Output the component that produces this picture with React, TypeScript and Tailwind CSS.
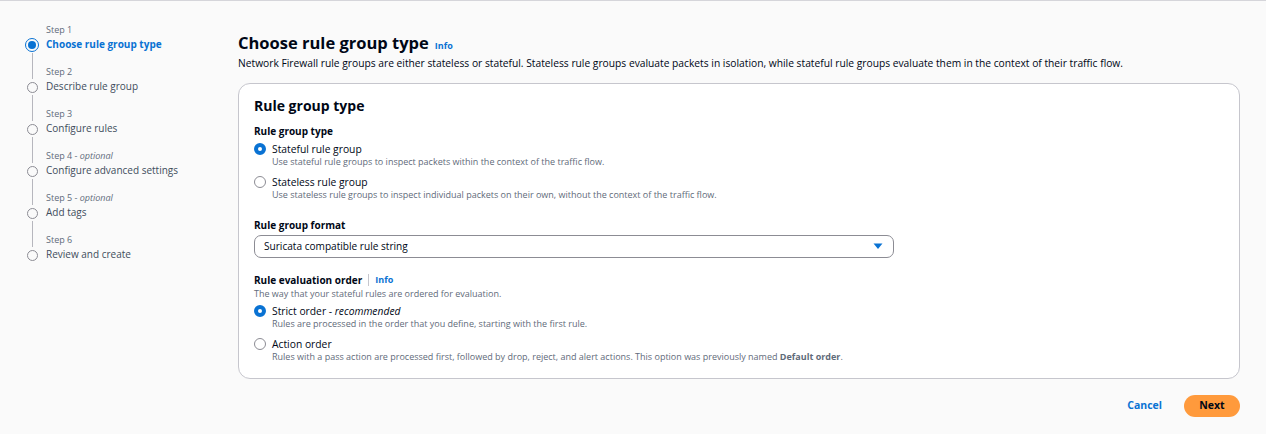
import React from "react";

const steps = [
  { step: "Step 1", optional: false, label: "Choose rule group type", active: true },
  { step: "Step 2", optional: false, label: "Describe rule group", active: false },
  { step: "Step 3", optional: false, label: "Configure rules", active: false },
  { step: "Step 4", optional: true, label: "Configure advanced settings", active: false },
  { step: "Step 5", optional: true, label: "Add tags", active: false },
  { step: "Step 6", optional: false, label: "Review and create", active: false },
];

function Radio({ checked }: { checked: boolean }) {
  return checked ? (
    <span className="mt-[1px] h-[12px] w-[12px] shrink-0 rounded-full border-[4px] border-[#0972d3] bg-white" />
  ) : (
    <span className="mt-[1px] h-[12px] w-[12px] shrink-0 rounded-full border border-[#8c8c94] bg-white" />
  );
}

function Option({
  checked,
  title,
  desc,
}: {
  checked: boolean;
  title: React.ReactNode;
  desc: React.ReactNode;
}) {
  return (
    <div className="flex gap-[6px]">
      <Radio checked={checked} />
      <div>
        <div className="text-[10.3px] leading-[14px] text-[#000716]">{title}</div>
        <div className="text-[9px] leading-[12px] text-[#5f6b7a]">{desc}</div>
      </div>
    </div>
  );
}

export default function App() {
  return (
    <div className="h-[434px] w-[1266px] border-t border-[#d5d5da] bg-[#fafafa] font-['Open_Sans',sans-serif] text-[#000716]">
      <div className="flex">
        {/* Side navigation */}
        <nav className="w-[238px] shrink-0 pl-[26px] pt-[22px]">
          {steps.map((s, i) => (
            <div key={s.step} className="flex gap-[8px]">
              <div className="flex w-[12px] flex-col items-center">
                <div className={i > 0 ? "h-[14px] w-[1px] bg-[#b6b6bd]" : "h-[14px] w-[1px]"} />
                <div className="flex h-[16px] items-center justify-center">
                  {s.active ? (
                    <span className="flex h-[14px] w-[14px] items-center justify-center rounded-full border-[1.5px] border-[#0972d3]">
                      <span className="h-[8px] w-[8px] rounded-full bg-[#0972d3]" />
                    </span>
                  ) : (
                    <span className="h-[11px] w-[11px] rounded-full border border-[#8c8c94]" />
                  )}
                </div>
                {i < steps.length - 1 && <span className="w-[1px] flex-1 bg-[#b6b6bd]" />}
              </div>
              <div className="pb-[14px]">
                <div className="text-[9px] leading-[14px] text-[#5f6b7a]">
                  {s.step}
                  {s.optional && (
                    <>
                      {" - "}
                      <i>optional</i>
                    </>
                  )}
                </div>
                <div
                  className={
                    s.active
                      ? "text-[10px] font-bold leading-[14px] text-[#0972d3]"
                      : "text-[10px] leading-[14px] text-[#414d5c]"
                  }
                >
                  {s.label}
                </div>
              </div>
            </div>
          ))}
        </nav>

        {/* Main content */}
        <main className="w-[1002px] pt-[31px]">
          <div className="flex items-baseline gap-[6px]">
            <h1 className="text-[16.5px] font-bold leading-[22px]">Choose rule group type</h1>
            <span className="text-[9px] font-bold text-[#0972d3]">Info</span>
          </div>
          <p className="mt-[2px] text-[10.25px] leading-[14px] text-[#000716]">
            Network Firewall rule groups are either stateless or stateful. Stateless rule groups evaluate packets in isolation, while stateful rule groups evaluate them in the context of their traffic flow.
          </p>

          <section className="mt-[13px] h-[296px] rounded-[12px] border border-[#c6c6cd] bg-white px-[15px] pt-[12px]">
            <h2 className="text-[14px] font-bold leading-[20px]">Rule group type</h2>

            <div className="mt-[8px] text-[10px] font-bold leading-[14px]">Rule group type</div>
            <div className="mt-[4px] flex flex-col gap-[7px]">
              <Option
                checked
                title="Stateful rule group"
                desc="Use stateful rule groups to inspect packets within the context of the traffic flow."
              />
              <Option
                checked={false}
                title="Stateless rule group"
                desc="Use stateless rule groups to inspect individual packets on their own, without the context of the traffic flow."
              />
            </div>

            <div className="mt-[17px] text-[10px] font-bold leading-[14px]">Rule group format</div>
            <div className="mt-[3px] flex h-[23px] w-[640px] items-center justify-between rounded-[7px] border border-[#8c8c94] bg-white pl-[9px] pr-[10px]">
              <span className="text-[10.1px] text-[#000716]">Suricata compatible rule string</span>
              <svg width="10" height="7" viewBox="0 0 10 7">
                <path d="M0.5 0.5 H9.5 L5 6 Z" fill="#0972d3" />
              </svg>
            </div>

            <div className="mt-[15px] flex items-center text-[10px] leading-[14px]">
              <span className="font-bold">Rule evaluation order</span>
              <span className="mx-[6px] h-[12px] w-[1px] bg-[#c6c6cd]" />
              <span className="text-[9px] font-bold text-[#0972d3]">Info</span>
            </div>
            <div className="text-[9px] leading-[14px] text-[#5f6b7a]">
              The way that your stateful rules are ordered for evaluation.
            </div>
            <div className="mt-[3px] flex flex-col gap-[7px]">
              <Option
                checked
                title={
                  <>
                    Strict order - <i>recommended</i>
                  </>
                }
                desc="Rules are processed in the order that you define, starting with the first rule."
              />
              <Option
                checked={false}
                title="Action order"
                desc={
                  <>
                    Rules with a pass action are processed first, followed by drop, reject, and alert actions. This option was previously named <b>Default order</b>.
                  </>
                }
              />
            </div>
          </section>

          <div className="mt-[16px] flex items-center justify-end gap-[22px]">
            <button className="text-[10.5px] font-bold text-[#0972d3]">Cancel</button>
            <button className="h-[22px] w-[56px] rounded-full bg-[#ff9a3c] text-[10.5px] font-bold text-[#000716]">
              Next
            </button>
          </div>
        </main>
      </div>
    </div>
  );
}
